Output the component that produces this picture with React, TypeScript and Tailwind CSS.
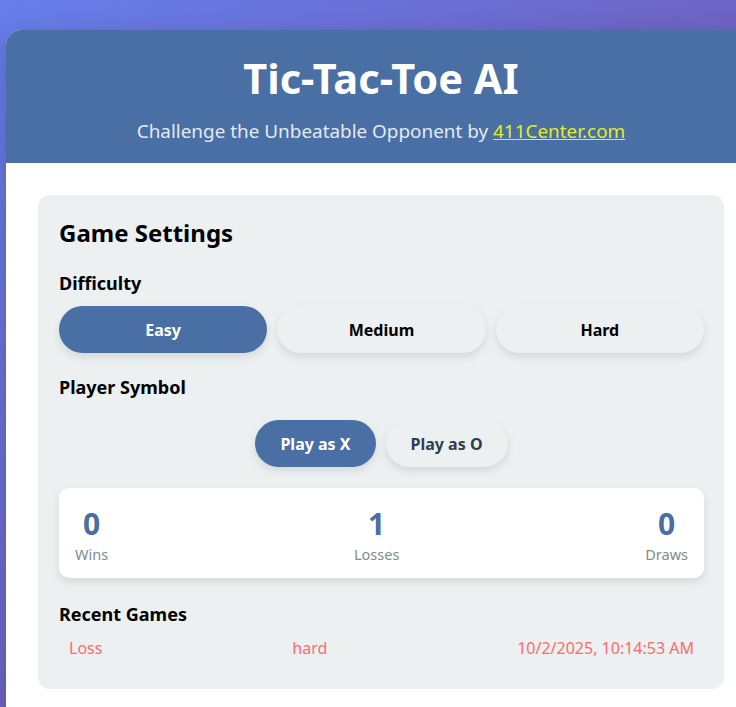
import { useState } from 'react'

const FONT = { fontFamily: '"Segoe UI", "Noto Sans", "Open Sans", sans-serif' }

const DIFFICULTIES = ['Easy', 'Medium', 'Hard']

export default function App() {
  const [difficulty, setDifficulty] = useState('Easy')
  const [symbol, setSymbol] = useState('X')

  return (
    <div
      className="w-[736px] h-[707px] overflow-hidden bg-[linear-gradient(135deg,#667eea_0%,#764ba2_100%)]"
      style={FONT}
    >
      <div className="ml-[6px] mt-[30px] w-[750px] bg-white rounded-tl-[15px] overflow-hidden shadow-[0_10px_30px_rgba(0,0,0,0.2)] min-h-[700px]">
        {/* Header */}
        <div className="bg-[#4a6fa5] h-[133px] pt-[21px] text-center">
          <h1 className="text-[41.5px] leading-[54px] font-bold text-white">Tic-Tac-Toe AI</h1>
          <p className="mt-[14px] text-[18.9px] leading-[24px] text-[#e4eaf2]">
            Challenge the Unbeatable Opponent by{' '}
            <a href="#" className="text-[#e3ee1c] underline">
              411Center.com
            </a>
          </p>
        </div>

        {/* Body */}
        <div className="p-[32px]">
          <div className="bg-[#ecf0f1] rounded-[12px] pt-[22px] pb-[21px] pl-[21px] pr-[20px]">
            <h2 className="text-[24px] leading-[32px] font-bold text-black">Game Settings</h2>

            <h3 className="mt-[22px] text-[18px] leading-[24px] font-bold text-black">Difficulty</h3>
            <div className="mt-[11px] flex gap-[10px]">
              {DIFFICULTIES.map((d) => (
                <button
                  key={d}
                  type="button"
                  onClick={() => setDifficulty(d)}
                  className={
                    difficulty === d
                      ? 'flex-1 h-[47px] rounded-full bg-[#4a6fa5] text-white text-[16px] font-bold shadow-[0_4px_8px_rgba(0,0,0,0.1)]'
                      : 'flex-1 h-[47px] rounded-full bg-[#ecf0f1] text-black text-[16px] font-bold shadow-[0_4px_8px_rgba(0,0,0,0.1)]'
                  }
                >
                  {d}
                </button>
              ))}
            </div>

            <h3 className="mt-[22px] text-[18px] leading-[24px] font-bold text-black">Player Symbol</h3>
            <div className="mt-[21px] flex justify-center gap-[10px]">
              {['X', 'O'].map((s) => (
                <button
                  key={s}
                  type="button"
                  onClick={() => setSymbol(s)}
                  className={
                    symbol === s
                      ? 'h-[47px] px-[25px] rounded-full bg-[#4a6fa5] text-white text-[16px] font-bold shadow-[0_4px_8px_rgba(0,0,0,0.1)]'
                      : 'h-[47px] px-[25px] rounded-full bg-[#ecf0f1] text-[#2c3e50] text-[16px] font-bold shadow-[0_4px_8px_rgba(0,0,0,0.1)]'
                  }
                >
                  Play as {s}
                </button>
              ))}
            </div>

            {/* Stats */}
            <div className="mt-[21px] h-[90px] bg-white rounded-[10px] shadow-[0_4px_8px_rgba(0,0,0,0.1)] px-[16px] pt-[16px] flex justify-between">
              {[
                { n: 0, label: 'Wins' },
                { n: 1, label: 'Losses' },
                { n: 0, label: 'Draws' },
              ].map((s) => (
                <div key={s.label} className="text-center">
                  <div className="text-[30px] leading-[40px] font-bold text-[#4a6fa5]">{s.n}</div>
                  <div className="text-[14.5px] leading-[20px] text-[#7f8c8d]">{s.label}</div>
                </div>
              ))}
            </div>

            <h3 className="mt-[24px] text-[18px] leading-[24px] font-bold text-black">Recent Games</h3>
            <div className="mt-[2px] flex justify-between px-[10px] py-[8px] text-[16px] leading-[24px] text-[#ff6b6b]">
              <span>Loss</span>
              <span>hard</span>
              <span>10/2/2025, 10:14:53 AM</span>
            </div>
          </div>
        </div>
      </div>
    </div>
  )
}
